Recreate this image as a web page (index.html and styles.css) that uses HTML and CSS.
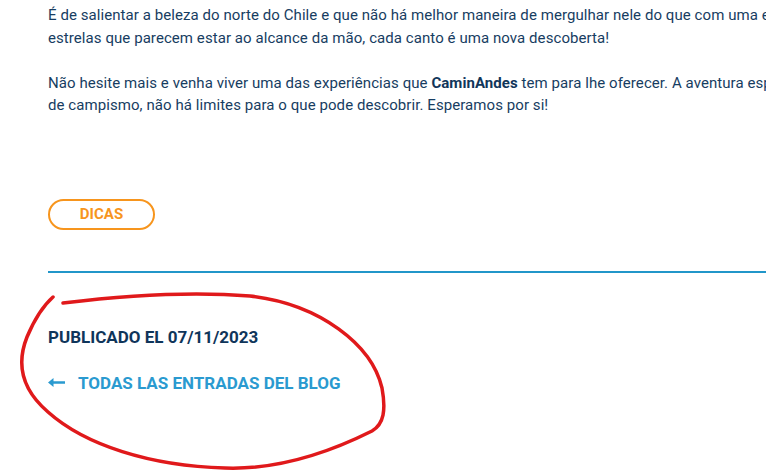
FILE: index.html
```html
<!DOCTYPE html>
<html lang="pt">
<head>
<meta charset="utf-8">
<title>Blog</title>
<link rel="stylesheet" href="styles.css">
</head>
<body>
<main class="post">
  <div class="content">
    <p>É de salientar a beleza do norte do Chile e que não há melhor maneira de mergulhar nele do que com uma experiência de campismo. Com céus cheios de<br>estrelas que parecem estar ao alcance da mão, cada canto é uma nova descoberta!</p>
    <p>Não hesite mais e venha viver uma das experiências que <strong>CaminAndes</strong> tem para lhe oferecer. A aventura espera por si e, com o nosso equipamento<br>de campismo, não há limites para o que pode descobrir. Esperamos por si!</p>
  </div>
  <div class="tags">
    <a class="tag" href="#">DICAS</a>
  </div>
  <hr class="divider">
  <div class="meta">
    <p class="published">PUBLICADO EL 07/11/2023</p>
    <a class="back" href="#">
      <svg class="arrow" width="17" height="9" viewBox="0 0 17 9" aria-hidden="true"><path d="M0 4.5 L5.5 0 L5.5 3.2 L17 3.2 L17 5.8 L5.5 5.8 L5.5 9 Z" fill="#2a9ad0"/></svg>
      <span>TODAS LAS ENTRADAS DEL BLOG</span>
    </a>
  </div>
</main>
<svg class="annotation" width="766" height="473" viewBox="0 0 766 473" aria-hidden="true">
  <path d="M63,303 C120,296 190,291 250,296 C320,304 372,345 382,388 C386,410 384,424 372,431 C330,452 280,470 225,468 C150,466 85,445 48,412 C20,388 17,362 27,337 C35,318 44,305 53,297" fill="none" stroke="#e0191b" stroke-width="3.5" stroke-linecap="round" stroke-linejoin="round"/>
</svg>
</body>
</html>
```
FILE: styles.css
```css
html, body {
  margin: 0;
  padding: 0;
  overflow: hidden;
  background: #ffffff;
}
body {
  width: 766px;
  height: 473px;
  position: relative;
  font-family: Roboto, "Liberation Sans", Arial, sans-serif;
}
.post {
  width: 1100px;
  padding: 4px 0 0 48px;
}
.content p {
  margin: 0 0 22.5px;
  font-size: 15px;
  line-height: 22.5px;
  letter-spacing: 0.07px;
  color: #173d62;
  white-space: nowrap;
}
.content p strong {
  font-weight: 700;
  color: #11365a;
}
.tags {
  margin-top: 82px;
  display: flex;
}
.tag {
  display: inline-flex;
  align-items: center;
  justify-content: center;
  box-sizing: border-box;
  width: 107px;
  height: 31px;
  border: 2px solid #f7951d;
  border-radius: 16px;
  color: #f7951d;
  font-weight: 700;
  font-size: 15px;
  text-decoration: none;
}
.divider {
  margin: 41px 0 0;
  border: 0;
  height: 2px;
  background: #2196c9;
}
.meta {
  padding-top: 53px;
}
.published {
  margin: 0;
  font-size: 17px;
  font-weight: 700;
  color: #0f355a;
  line-height: 22px;
}
.back {
  margin-top: 24px;
  display: flex;
  align-items: center;
  gap: 13px;
  color: #2a9ad0;
  text-decoration: none;
  font-weight: 700;
  font-size: 17px;
  line-height: 22px;
}
.annotation {
  position: absolute;
  left: 0;
  top: 0;
  pointer-events: none;
}
```
